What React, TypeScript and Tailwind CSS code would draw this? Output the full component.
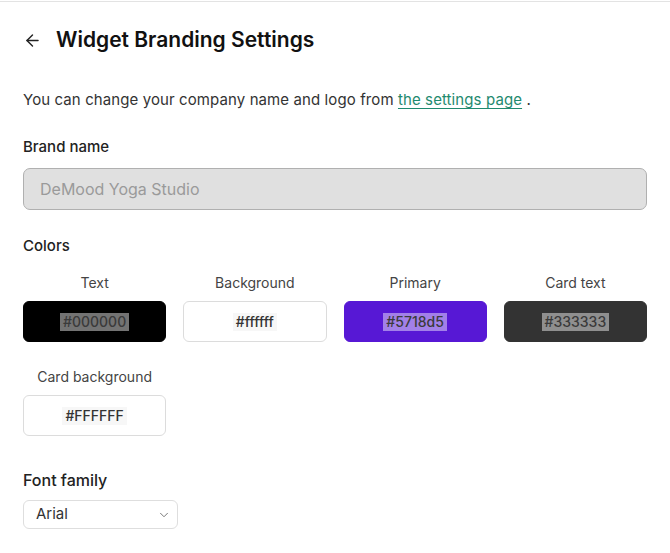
import { ArrowLeft, ChevronDown } from "lucide-react"

const colors = [
  { label: "Text", value: "#000000", bg: "bg-black", border: "border-black", chip: "bg-white/45 text-[#3a3a3a]" },
  { label: "Background", value: "#ffffff", bg: "bg-white", border: "border-[#dcdcdc]", chip: "bg-[#f7f7f7] text-[#333]" },
  { label: "Primary", value: "#5718d5", bg: "bg-[#5718d5]", border: "border-[#5718d5]", chip: "bg-white/45 text-[#3a3a3a]" },
  { label: "Card text", value: "#333333", bg: "bg-[#333333]", border: "border-[#333333]", chip: "bg-white/45 text-[#3a3a3a]" },
  { label: "Card background", value: "#FFFFFF", bg: "bg-white", border: "border-[#dcdcdc]", chip: "bg-[#f7f7f7] text-[#333]" },
]

export default function App() {
  return (
    <div className="min-h-screen bg-white font-['Inter',sans-serif] text-[#1a1a1a]">
      <div className="border-t border-[#e3e3e3] mt-[1px]" />
      <div className="px-[23px]">

        {/* Header */}
        <div className="flex items-center gap-[14px] pt-[23px] h-[53px]">
          <ArrowLeft size={19} strokeWidth={1.8} className="text-[#222]" />
          <h1 className="text-[21px] font-semibold text-[#111] tracking-[0px]">Widget Branding Settings</h1>
        </div>

        <p className="mt-[34px] text-[15px] text-[#333] leading-[22px] tracking-[0.1px]">
          You can change your company name and logo from{" "}
          <a href="#" className="text-[#1f8a6f] underline underline-offset-[3px]">the settings page</a> .
        </p>

        {/* Brand name */}
        <p className="mt-[25px] text-[15px] font-medium text-[#222] leading-[22px]">Brand name</p>
        <input
          type="text"
          disabled
          placeholder="DeMood Yoga Studio"
          className="mt-[10px] w-full h-[42px] px-4 bg-[#e0e0e0] border border-[#b0b0b0] rounded-[7px] text-[16px] placeholder-[#9a9a9a]"
        />

        {/* Colors */}
        <p className="mt-[25px] text-[15px] font-medium text-[#222] leading-[22px]">Colors</p>
        <div className="grid grid-cols-4 gap-x-[17px] gap-y-[25px] mt-[16px]">
          {colors.map(c => (
            <div key={c.label} className="flex flex-col items-center">
              <p className="text-[14px] text-[#444] leading-[20px]">{c.label}</p>
              <div className={`mt-[8px] w-full h-[41px] rounded-[6px] border ${c.bg} ${c.border} flex items-center justify-center`}>
                <span className={`px-[3px] text-[14px] font-medium leading-[18px] ${c.chip}`}>{c.value}</span>
              </div>
            </div>
          ))}
        </div>

        {/* Font family */}
        <p className="mt-[33px] text-[16px] font-medium text-[#222] leading-[22px]">Font family</p>
        <div className="mt-[9px] w-[155px] h-[29px] border border-[#dedede] rounded-[6px] flex items-center justify-between pl-[12px] pr-[6px]">
          <span className="text-[15px] text-[#333]">Arial</span>
          <ChevronDown size={14} strokeWidth={1.5} className="text-[#666]" />
        </div>
      </div>
    </div>
  )
}
